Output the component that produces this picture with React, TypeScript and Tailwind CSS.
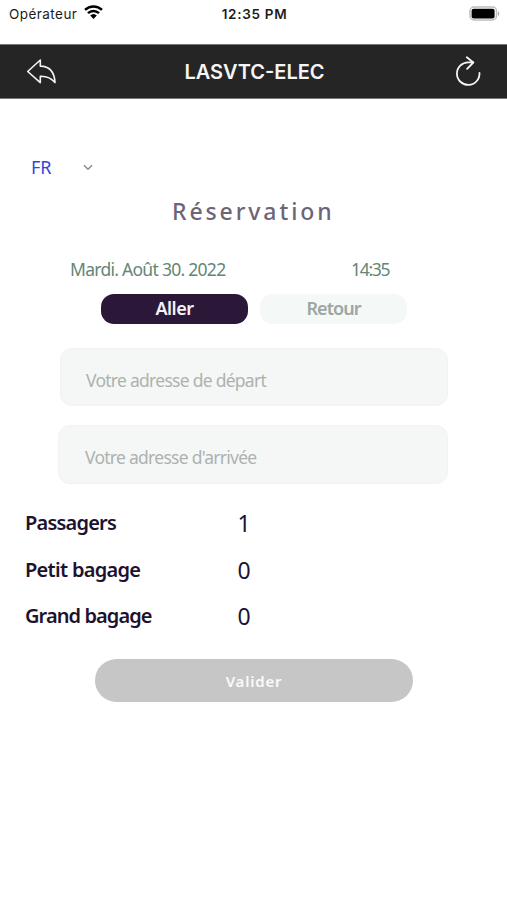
import clsx from 'clsx';

/** Booking screen: trip type, addresses, passenger and luggage counts. */

const COUNTS = [
  { label: 'Passagers', value: 1, spacing: 'tracking-[-0.8px]' },
  { label: 'Petit bagage', value: 0, spacing: 'tracking-[-0.7px]' },
  { label: 'Grand bagage', value: 0, spacing: 'tracking-[-0.92px]' },
];

function StatusBar() {
  return (
    <div className="grid h-11 grid-cols-3 items-start pt-[5px] font-['Inter'] text-[13.5px] leading-[18px] text-[#1c1c1c]">
      <div className="flex items-start gap-[7px] pl-[9px]">
        <span className="tracking-[0.45px]">Opérateur</span>
        <WifiIcon />
      </div>
      <div className="pl-[2px] text-center font-semibold tracking-[0.7px] whitespace-nowrap">12:35 PM</div>
      <div className="flex h-[17px] items-center justify-end pr-[7px]">
        <BatteryIcon />
      </div>
    </div>
  );
}

function WifiIcon() {
  return (
    <svg width="19" height="14" viewBox="0 0 19 14" fill="none" stroke="#000" strokeWidth="2.5">
      <path d="M1 4.9a12.2 12.2 0 0 1 17 0" />
      <path d="M4 8.2a7.9 7.9 0 0 1 11 0" />
      <path d="M9.5 13.9 6.2 10.5a4.8 4.8 0 0 1 6.6 0Z" fill="#000" stroke="none" />
    </svg>
  );
}

function BatteryIcon() {
  return (
    <svg width="31" height="15" viewBox="0 0 31 15">
      <rect x="1" y="1" width="26.5" height="13" rx="4" fill="#fff" stroke="#bdbdbd" strokeWidth="1.5" />
      <rect x="2.6" y="2.7" width="23" height="9.8" rx="2" fill="#000" />
      <path d="M29 5.2c1.8.8 1.8 4 0 4.8Z" fill="#aaa" />
    </svg>
  );
}

function Header() {
  return (
    <header className="flex h-[55px] items-center justify-between border-y border-[#777] bg-[#252525] pr-[25px] pl-[26px] text-[#f5f5f5]">
      <svg width="31" height="27" viewBox="0 0 31 27" fill="none" stroke="currentColor" strokeWidth="1.6" strokeLinejoin="round">
        <path d="M1.7 13.5 14.3 2v6.1C23.5 8.3 28.5 14 29 24.6c-3.9-4.9-8.3-6.5-14.7-6.3v6.3Z" />
      </svg>
      <h1 className="pr-[2px] font-['Inter'] text-[20px] font-semibold">LASVTC-ELEC</h1>
      <svg width="28" height="32" viewBox="0 0 28 32" fill="none" stroke="currentColor" strokeWidth="1.8" strokeLinecap="round" strokeLinejoin="round">
        <path d="M25.5 17A11.3 11.3 0 1 1 14.3 6.3h5" />
        <path d="m12.8 1.2 6.5 5.3-6.2 6.3" />
      </svg>
    </header>
  );
}

function TripTab({ label, active }: { label: string; active?: boolean }) {
  return (
    <button
      type="button"
      className={clsx(
        'h-[30px] w-[147px] rounded-[13px] pb-[2px] text-[18px] leading-[28px] font-semibold',
        active
          ? 'bg-[#2b1738] tracking-[-0.5px] text-[#f4f1f6]'
          : 'bg-[#f4f8f7] tracking-[-0.95px] text-[#9da6a3]',
      )}
    >
      {label}
    </button>
  );
}

export default function App() {
  return (
    <div className="flex h-[900px] w-[507px] flex-col overflow-hidden bg-white font-['Noto_Sans',sans-serif]">
      <StatusBar />
      <Header />
      <main className="flex flex-col">
        <div className="mt-[56px] flex h-6 items-center pl-[31px]">
          <span className="w-[52px] text-[18px] text-[#3344dc]">FR</span>
          <svg width="10" height="7" viewBox="0 0 10 7" fill="none" stroke="#8c8c8c" strokeWidth="1.5">
            <path d="m1 1.3 4 4 4-4" />
          </svg>
        </div>
        <h2 className="mt-[16px] pl-[172px] text-[23px] leading-8 font-medium tracking-[2.9px] text-[#6c6577]">
          Réservation
        </h2>
        <div className="mt-[30px] flex h-6 items-center pl-[70px] text-[17.5px] tracking-[-0.72px] text-[#648577]">
          <span className="w-[281px]">Mardi. Août 30. 2022</span>
          <span className="tracking-[-1.3px]">14:35</span>
        </div>
        <div className="mt-[13px] flex gap-[12px] pl-[101px]">
          <TripTab label="Aller" active />
          <TripTab label="Retour" />
        </div>
        <div className="mt-[24px] ml-[60px] flex h-[58px] w-[388px] items-center rounded-[12px] border border-[#f1f3f2] bg-[#f4f7f6] pt-[6px] pl-[25px] text-[17.5px] tracking-[-0.73px] text-[#adb2b0]">
          Votre adresse de départ
        </div>
        <div className="mt-[19px] ml-[58px] flex h-[59px] w-[390px] items-center rounded-[12px] border border-[#f1f3f2] bg-[#f4f7f6] pt-[6px] pl-[26px] text-[17.5px] tracking-[-0.73px] text-[#adb2b0]">
          Votre adresse d'arrivée
        </div>
        <div className="mt-[16px] flex flex-col text-[#1d1230]">
          {COUNTS.map((row) => (
            <div key={row.label} className="flex h-[46.5px] items-center pl-[25px]">
              <span className={clsx('w-[207px] text-[20px] font-semibold', row.spacing)}>{row.label}</span>
              <span className="w-6 text-center text-[23px]">{row.value}</span>
            </div>
          ))}
        </div>
        <button
          type="button"
          className="mt-[19.5px] ml-[95px] h-[43px] w-[318px] rounded-full bg-[#c6c6c6] pt-[2px] text-[15px] font-semibold tracking-[0.8px] text-[#fafafa]"
        >
          Valider
        </button>
      </main>
    </div>
  );
}
